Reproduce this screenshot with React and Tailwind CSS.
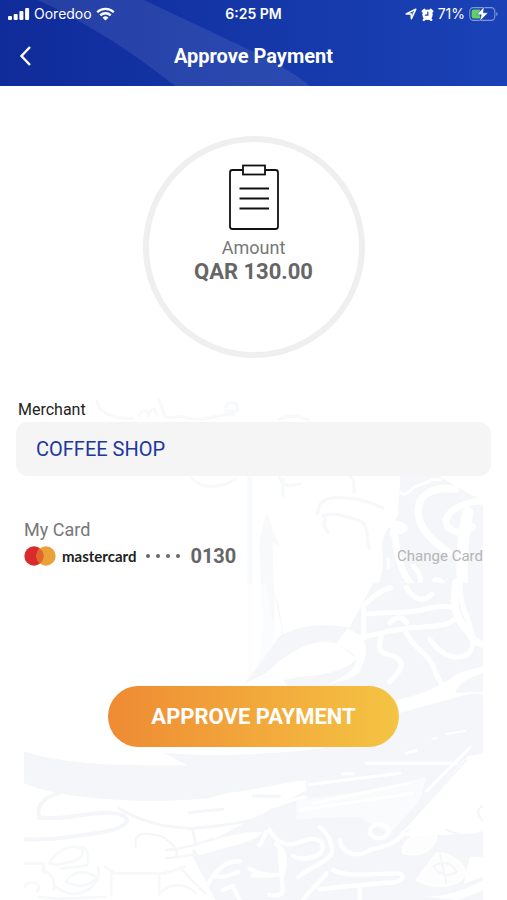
import { useState } from "react";

const SIGNAL_BARS = [4, 6, 9, 12];

function SignalIcon() {
  return (
    <svg width="22" height="14" viewBox="0 0 22 14" fill="white" aria-hidden="true">
      {SIGNAL_BARS.map((h, i) => (
        <rect key={h} x={i * 5.7} y={13 - h} width="4" height={h} rx="1" />
      ))}
    </svg>
  );
}

function WifiIcon() {
  return (
    <svg width="19" height="14" viewBox="0 0 19 14" fill="none" stroke="white" strokeWidth="2.3" aria-hidden="true">
      <path d="M1.2 5.2a11.8 11.8 0 0 1 16.6 0" />
      <path d="M4.3 8.4a7.4 7.4 0 0 1 10.4 0" />
      <path d="M9.5 13.6 6.6 10.7a4.1 4.1 0 0 1 5.8 0z" fill="white" stroke="none" />
    </svg>
  );
}

function LocationIcon() {
  return (
    <svg width="12" height="12" viewBox="0 0 12 12" fill="none" stroke="white" strokeWidth="1.5" strokeLinejoin="round" aria-hidden="true">
      <path d="M1.2 6 10.8 1.2 6.4 10.8 6.1 6.1z" />
      <path d="M6.1 6.1 10.8 1.2 6.4 10.8z" fill="white" fillOpacity="0.4" stroke="none" />
    </svg>
  );
}

function AlarmIcon() {
  return (
    <svg width="13" height="13" viewBox="0 0 13 13" aria-hidden="true">
      <path d="M1.8 3.4 3.4 1.8M11.2 3.4 9.6 1.8M2.8 11.8l1-1M10.2 11.8l-1-1" stroke="white" strokeWidth="2.4" strokeLinecap="round" />
      <circle cx="6.5" cy="6.8" r="5.2" fill="white" />
      <path d="M6.8 4v3.2H4.4" fill="none" stroke="#1a3fb2" strokeWidth="1.2" strokeLinecap="round" />
    </svg>
  );
}

function BatteryIcon() {
  return (
    <svg width="30" height="16" viewBox="0 0 30 16" aria-hidden="true">
      <rect x="0.8" y="1.6" width="25" height="12.8" rx="3.6" fill="none" stroke="white" strokeOpacity="0.45" strokeWidth="1.1" />
      <path d="M27.4 5.8v4.4a2.6 2.6 0 0 0 0-4.4z" fill="white" fillOpacity="0.5" />
      <path d="M4.6 3.4H11v9.2H4.6a2 2 0 0 1-2-2V5.4a2 2 0 0 1 2-2z" fill="#63d067" />
      <path d="M15.2 0.8 7.6 8.8h4.7l-1.6 6.4 8.4-8.4h-4.8z" fill="white" stroke="#1a3fb2" strokeWidth="0.5" />
    </svg>
  );
}

function ClipboardIcon() {
  return (
    <svg width="52" height="68" viewBox="0 0 52 68" fill="none" stroke="#111" strokeWidth="1.8" aria-hidden="true">
      <path d="M15 6H4.5A2.5 2.5 0 0 0 2 8.5v54A2.5 2.5 0 0 0 4.5 65h43a2.5 2.5 0 0 0 2.5-2.5v-54A2.5 2.5 0 0 0 47.5 6H37" />
      <rect x="15" y="1.5" width="22" height="9" />
      <path d="M11.5 24.5H41M11.5 34.5H41M11.5 44.5H41" />
    </svg>
  );
}

function MastercardIcon() {
  return (
    <svg width="32" height="20" viewBox="0 0 32 20" aria-hidden="true">
      <circle cx="10" cy="10" r="9.7" fill="#d92b2c" />
      <circle cx="22" cy="10" r="9.7" fill="#eba13a" />
      <path d="M16 2.4a9.7 9.7 0 0 1 0 15.2 9.7 9.7 0 0 1 0-15.2z" fill="#e0662b" />
    </svg>
  );
}

// Faint dhow and calligraphy watermark, pinned to the bottom of the screen
function Watermark() {
  return (
    <svg
      className="pointer-events-none absolute inset-x-6 bottom-0"
      viewBox="25 390 458 510"
      fill="none"
      stroke="#f4f6f9"
      strokeLinecap="round"
      strokeLinejoin="round"
      aria-hidden="true"
    >
      {/* pennant above the sail */}
      <g strokeWidth="3" stroke="#f7f9fb">
        <path d="M98 402c1 12 16 18 36 17M140 417c3-8 8-6 9 0 4-10 6-9 8-2M160 401l6 17c8 3 14-4 22 1 16 4 30-4 46-4M226 408c4-8 14-4 12 4h-12M280 420c10-5 20-3 28 0M192 478c8 12 28 12 44 2" />
      </g>

      {/* mast */}
      <g fill="#f4f6f9" stroke="none">
        <path d="M248 476h5v208h-5z" fill="#f8fafc" />
        <path d="M260 545c1-12 4-20 8-32 3 16 8 22 12 34l-7-4 2 70c0 22-3 50-5 70h-16c9-28 10-60 8-82z" fill="#f7f9fb" />
        <path d="M274 590c7 20 10 42 14 78l4 8h-4c-2-34-8-58-14-86z" />
      </g>

      {/* sail outline */}
      <g transform="translate(310 470) scale(0.3333)">
        <path d="M272 18h110l140 80v330H160c60-80 64-140 56-200 10-60 30-50 48-90z" fill="#f4f6f9" stroke="none" />
        <g stroke="#f6f8fa" strokeWidth="10">
          <path d="M-90 24c10 34 40 24 60 20M-80 30v50M120 20c16 10 12 30 14 50M24 134c2-60 60-50 100-46 40 0 70 18 96 28M40 140c30-14 70 2 110 14 28 12 20 50 28 84M46 150c-10 20 4 30 8 38" />
        </g>
        <g stroke="white">
          <path d="M272 70c20 20 30-20 60-24 30-6 30-22 60-14" strokeWidth="9" />
          <path d="M436 60c-70-10-120 20-110 80 10 50 50 80 90 110" strokeWidth="22" />
          <path d="M520 96c-50 0-100 20-112 56 0 36 50 50 80 20" strokeWidth="20" />
          <path d="M474 130c-20 90-24 180-10 290" strokeWidth="34" />
          <path d="M250 160c10 90 20 150 60 190 30 40 70 30 84-8" strokeWidth="20" />
          <path d="M244 156c30 0 50 10 48 24-10 16-30 12-48 20z" fill="white" strokeWidth="4" />
          <path d="M310 290c20 20 30 40 16 60M374 332c16-4 30 4 20 20" strokeWidth="14" />
          <path d="M170 408c20-34 60-50 104-66M236 270v24" strokeWidth="10" />
        </g>
      </g>

      {/* stern and the letters around it */}
      <g transform="translate(240 590) scale(0.3333)">
        <path d="M400-20h330v560H0l460-120-90-120H0l120-160c60-34 120-40 210-26z" fill="#f4f6f9" stroke="none" />
        <path d="M0 300V-20h80l30 170-50 80z" fill="white" fillOpacity="0.5" stroke="none" />
        <path d="M70 260C140 190 220 140 290 162l60 44c-30 40-100 50-170 56-60 8-90 18-130 38z" fill="white" stroke="none" />
        <path d="M290 162l34-46c60 30 70 60 36 130-20 26-70 30-100 42 60-30 110-60 80-96z" fill="white" stroke="none" />
        <path d="M0 290l120-60 20 60z" fill="white" stroke="none" />
        <path d="M470 330c60-10 130-36 180-76 20-10 50-14 80-24v84c-20-6-50 0-90 12-50 14-110 30-160 44z" fill="white" stroke="none" />
        <path d="M645 310c10-30 50-50 85-60v56z" fill="#f4f6f9" stroke="none" />
        <g stroke="white" strokeWidth="15">
          <path d="M372 48v100M378 74c60-10 120 4 200-20 50-8 70 0 76 24-20 40-100 30-160 40-60 8-90 18-140 26" />
          <path d="M372 48c24-20 40-40 80-54M500-6c16 30 50 50 76 20" />
          <path d="M450 100c20-20 40-20 50 0M424 140c-10 40-10 50 40 60 40 20 14 50-14 76" />
          <path d="M500 130c20 50 70 60 84 110 6 20 10 24 20 40M570 150c30 40 60 60 100 50 40-10 30-70 10-120-14-30-20-60-20-100" />
        </g>
        <path d="M648-20c-10 70 0 110 40 150 10 20 20 30 42 34" stroke="white" strokeWidth="22" />
        <g stroke="white" strokeWidth="6">
          <path d="M410 500l80-24M500 472l60-10M560 458l30-14M620 432l56-8M380 520h250l50-50" />
        </g>
      </g>

      {/* hull, waves and the letters below */}
      <g transform="translate(20 740) scale(0.3333)">
        <path d="M14 34C130 74 320 80 504 76L430 38C650 60 900 30 1110 0h282v36L1150 290l242-10v205H590l-30-60-40-75v-20l230-120-40-56C500 200 150 190 14 130z" fill="#f4f6f9" stroke="none" />
        <path d="M620 160c100-10 180-36 240-38v30c-40 20-80 44-120 56-60 24-150 40-220 48l-20-60z" fill="white" stroke="none" />
        <path d="M1392 40v230l-110 10-70-30-70 30 200-230z" fill="white" stroke="none" />
        <path d="M830 180l200-26 190-42-20 70-90 100-90-50c-60 0-120 0-190 8z" fill="white" fillOpacity="0.5" stroke="none" />
        <path d="M520 320c70-20 130-46 210-44-20 30-110 46-190 70z" fill="white" stroke="none" />
        <g stroke="white" strokeWidth="9">
          <path d="M1040 70h270M870 134l270-34M880 190l290-60M840 210l340-50M970 102h30M1160 40l30-8" />
          <path d="M740 206c50-10 70-30 120-34M1350 24l-130 130" />
        </g>
        <g strokeWidth="9">
          <path d="M1340 60l-190 210M1386 200c-20 10-10 30 6 48M1280 270l60 20 50-14" strokeWidth="6" />
          <path d="M60 234C50 190 80 170 120 160M60 232c80 14 180-30 250-6 40 20-20 46-60 50-80 14-160 26-236 22" strokeWidth="12" />
          <path d="M300 206c90 50 140 54 220 60 80-10 150-14 220-36M520 270l10 40M510 218l100-10M700 168l80 2" />
          <path d="M350 320c-10-50 40-40 80-30 30 20 50 40 40 60M440 330c60-6 90-16 140-34M440 354c40 0 60-10 90-10" strokeWidth="7" />
        </g>
        <g stroke="#f6f8fa" strokeWidth="8">
          <path d="M90 370c30-50 80-60 100-40 10 30-40 40-80 44zM190 320c20 10 20 40 14 56l-80 10M14 370h60v30M70 390c30 10 40 30 34 60M14 440c20-24 60-10 40 14M140 426c20-36 60-36 90-16-10 34-60 30-90 16zM236 380c16 40-30 90-90 80l-40-20M256 380l30 20h150l60-20M276 404v60M420 404v60M480 380c30 30 50 60 80 80M420 460c40-36 80-30 110 0M60 470c60 10 120 4 200 0" />
        </g>
        <g stroke="white" strokeWidth="13">
          <path d="M560 440c30-50 60-80 100-76M586 408c30 6 50-4 70-12M610 450l30-12 20 40M740 276c-10 20-10 30-20 40" />
          <path d="M690 386c30 16 60 24 100 16 10-30 10-70-20-90M780 330l10 120c0 16-20 20-40 14M700 406h70" />
          <path d="M750 270c20 36 50 50 80 40 50-20 80-16 80 14-10 36-70 36-90 24M900 262c30 20 40 60 36 80-20 30-70 40-100 70" />
          <path d="M960 300c10 50 60 50 90 30 50-10 80-20 100-50M1050 280c0-30 40-36 56-14 4 30-36 40-56 14" />
          <path d="M940 390c50 24 110 10 190 10 40 4 10 30-30 28-60 6-130 10-200 20M920 400c-20 30-50 50-70 80M1020 446v34" />
        </g>
        <path d="M1150 320c20-40 80-60 100-30-10 50-60 60-100 50zM1250 340c40-4 80 30 90 60-20 40-90 50-150 20z" fill="white" fillOpacity="0.8" stroke="white" strokeWidth="6" />
        <path d="M1350 350h42v60l-60 20zM1210 470c70 0 120-20 182-50v30l-80 30z" fill="white" stroke="none" />
        <path d="M1240 380c30-20 60-10 70 16-20 14-50 10-70-16zM1260 340l20 90" strokeWidth="6" />
      </g>
    </svg>
  );
}

function StatusBar() {
  return (
    <div className="grid grid-cols-3 items-center px-2 pt-1 font-['Inter',sans-serif] text-sm leading-5 text-white">
      <div className="flex items-center gap-1">
        <SignalIcon />
        <span>Ooredoo</span>
        <WifiIcon />
      </div>
      <div className="text-center font-semibold">6:25 PM</div>
      <div className="flex items-center justify-end gap-1">
        <LocationIcon />
        <AlarmIcon />
        <span>71%</span>
        <BatteryIcon />
      </div>
    </div>
  );
}

function Header() {
  return (
    <header className="relative overflow-hidden bg-linear-to-r from-[#102b9a] to-[#1a42b6] pb-3">
      <svg className="absolute inset-0 h-full w-full" viewBox="0 0 507 86" preserveAspectRatio="none" aria-hidden="true">
        <path d="M38 0h106l110 52q40 20 56 34H175Q110 34 38 0z" fill="white" fillOpacity="0.09" />
      </svg>
      <div className="relative">
        <StatusBar />
        <div className="mt-3.5 flex items-center px-4">
          <button type="button" aria-label="Back" className="flex h-9 w-9 cursor-pointer items-center">
            <svg width="20" height="20" viewBox="0 0 20 20" fill="none" stroke="white" strokeWidth="2.4" aria-hidden="true">
              <path d="M14 1 5.5 10l8.5 9" />
            </svg>
          </button>
          <h1 className="flex-1 text-center text-xl font-bold text-white">Approve Payment</h1>
          <div className="w-9" />
        </div>
      </div>
    </header>
  );
}

export default function App() {
  const [merchant] = useState("COFFEE SHOP");

  return (
    <div className="relative flex min-h-screen flex-col overflow-hidden bg-white font-['Roboto',sans-serif]">
      <Watermark />
      <Header />

      <main className="relative flex flex-1 flex-col px-4 pt-[50px]">
        <section className="mx-auto flex h-[222px] w-[222px] flex-col items-center rounded-full border-[6px] border-[#efefef] pt-[22px]">
          <ClipboardIcon />
          <p className="mt-1 text-lg leading-6 text-[#777]">Amount</p>
          <p className="text-[22px] leading-6 font-bold text-[#666]">QAR 130.00</p>
        </section>

        <div className="mt-10">
          <label htmlFor="merchant" className="block px-0.5 text-base leading-6 text-[#222]">
            Merchant
          </label>
          <input
            id="merchant"
            type="text"
            readOnly
            value={merchant}
            className="h-[54px] w-full rounded-xl bg-[#f5f5f5] px-5 text-xl text-[#21379c] outline-none"
          />
        </div>

        <section className="mt-10 px-2">
          <h2 className="text-lg leading-7 text-[#777]">My Card</h2>
          <div className="flex items-center">
            <MastercardIcon />
            <span className="ml-1.5 font-['Lato',sans-serif] text-[15px] font-bold text-[#222]">mastercard</span>
            <span className="ml-2.5 flex gap-1.5" role="img" aria-label="Card number ending in">
              {[0, 1, 2, 3].map((i) => (
                <span key={i} className="h-1 w-1 rounded-full bg-[#666]" />
              ))}
            </span>
            <span className="ml-2.5 text-xl leading-6 font-bold text-[#666]">0130</span>
            <button type="button" className="ml-auto cursor-pointer text-[15px] leading-6 text-[#b5b5b5]">
              Change Card
            </button>
          </div>
        </section>

        <button
          type="button"
          className="mx-auto mt-[118px] h-[61px] w-[291px] cursor-pointer rounded-full bg-linear-to-r from-[#ee8a33] to-[#f4c443] text-[22px] font-bold text-white"
        >
          APPROVE PAYMENT
        </button>
      </main>
    </div>
  );
}
